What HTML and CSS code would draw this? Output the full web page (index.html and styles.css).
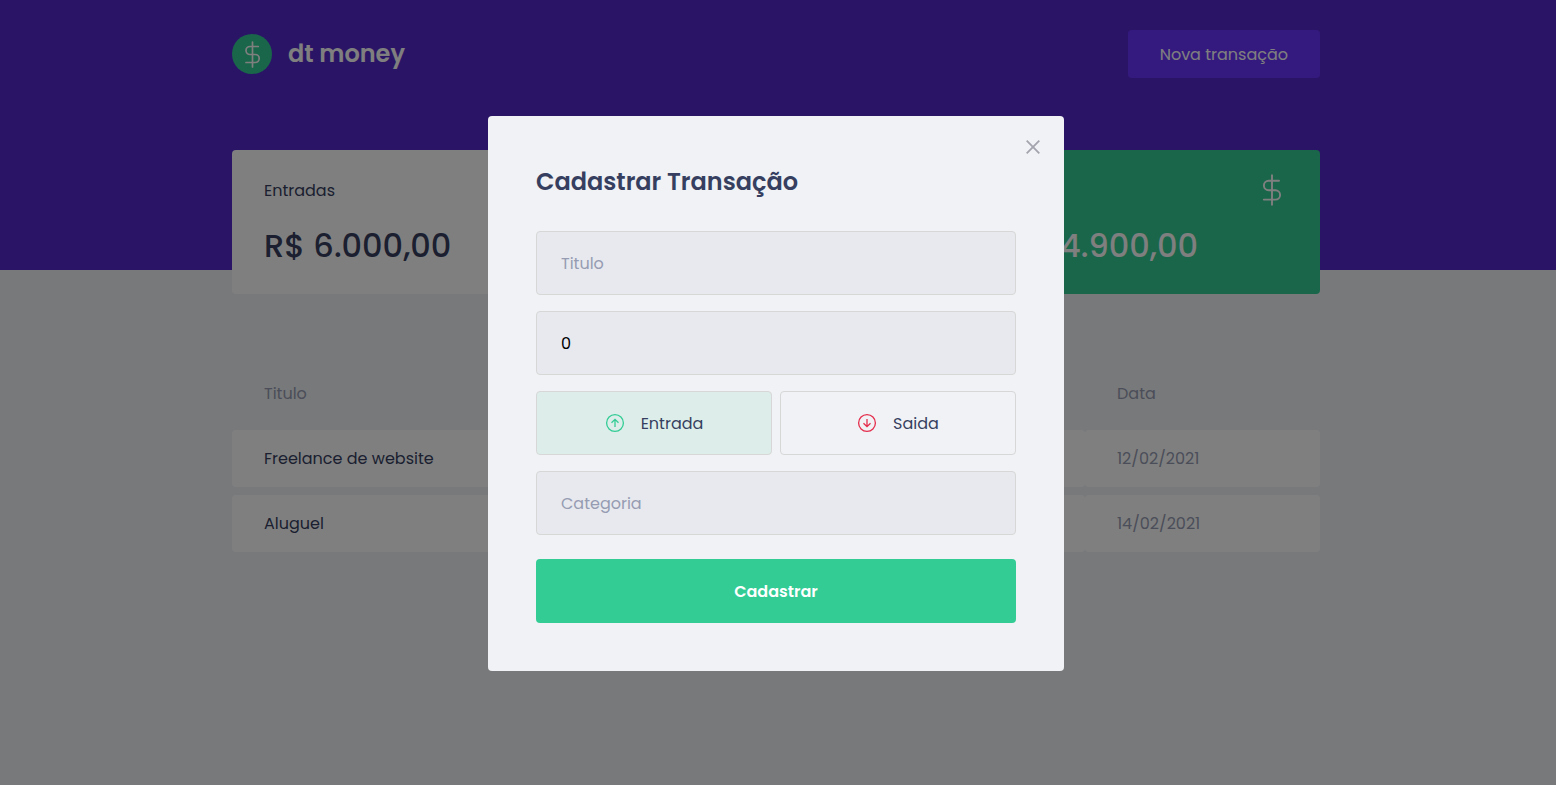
FILE: index.html
```html
<!DOCTYPE html>
<html lang="pt-BR">
<head>
<meta charset="utf-8">
<meta name="viewport" content="width=device-width, initial-scale=1">
<title>dt money</title>
<link rel="stylesheet" href="styles.css">
</head>
<body>
<div class="app">
  <header class="header">
    <div class="header-content">
      <div class="brand">
        <svg class="brand-logo" viewBox="0 0 40 40" aria-hidden="true">
          <circle cx="20" cy="20" r="20" fill="#33cc95"/>
          <path d="M20.500 8v25M26.300 12.500h-8.300a4 4 0 0 0 0 8h5.200a4 4 0 0 1 0 8h-9.200" fill="none" stroke="#fff" stroke-width="1.700" stroke-linecap="round"/>
        </svg>
        <span class="brand-name">dt money</span>
      </div>
      <button class="new-button" type="button">Nova transação</button>
    </div>
  </header>
  <main class="container">
    <section class="summary">
      <article class="card">
        <div class="card-head"><span>Entradas</span></div>
        <strong class="card-value">R$ 6.000,00</strong>
      </article>
      <article class="card"></article>
      <article class="card card-total">
        <div class="card-head">
          <svg class="card-icon" viewBox="0 0 32 32" aria-hidden="true">
            <path d="M16 1.200v29.600M23 6.800H12.600a4.700 4.700 0 0 0 0 9.400h6.800a4.700 4.700 0 0 1 0 9.400H7.800" fill="none" stroke="#fff" stroke-width="1.900" stroke-linecap="round"/>
          </svg>
        </div>
        <strong class="card-value">R$ 4.900,00</strong>
      </article>
    </section>
    <table class="transactions">
      <colgroup><col class="col-title"><col><col class="col-date"></colgroup>
      <thead>
        <tr><th>Titulo</th><th></th><th>Data</th></tr>
      </thead>
      <tbody>
        <tr><td class="title-cell">Freelance de website</td><td></td><td>12/02/2021</td></tr>
        <tr><td class="title-cell">Aluguel</td><td></td><td>14/02/2021</td></tr>
      </tbody>
    </table>
  </main>
</div>
<div class="overlay">
  <div class="modal" role="dialog" aria-modal="true" aria-labelledby="modal-title">
    <button class="close" type="button" aria-label="Fechar">
      <svg viewBox="0 0 14 14" aria-hidden="true"><path d="M.7.7l12.600 12.600M13.300.7L.7 13.300" fill="none" stroke="#a3a4ad" stroke-width="1.800"/></svg>
    </button>
    <form class="form">
      <h2 class="form-title" id="modal-title">Cadastrar Transação</h2>
      <input class="field" type="text" placeholder="Titulo" aria-label="Titulo">
      <input class="field" type="text" inputmode="decimal" value="0" aria-label="Valor">
      <div class="types">
        <button class="type type-active" type="button" aria-pressed="true">
          <svg viewBox="0 0 20 20" aria-hidden="true"><g fill="none" stroke="#33cc95" stroke-width="1.300"><circle cx="10" cy="10" r="8.400"/><path d="M10 14V6.800M6.500 9.800L10 6.300l3.500 3.500"/></g></svg>
          <span>Entrada</span>
        </button>
        <button class="type" type="button" aria-pressed="false">
          <svg viewBox="0 0 20 20" aria-hidden="true"><g fill="none" stroke="#e52e4d" stroke-width="1.300"><circle cx="10" cy="10" r="8.400"/><path d="M10 6v7.200M6.500 10.200l3.500 3.500 3.500-3.500"/></g></svg>
          <span>Saida</span>
        </button>
      </div>
      <input class="field" type="text" placeholder="Categoria" aria-label="Categoria">
      <button class="submit" type="submit">Cadastrar</button>
    </form>
  </div>
</div>
</body>
</html>
```

FILE: styles.css
```css
* { box-sizing: border-box; margin: 0; padding: 0; }

body {
  min-height: 100vh;
  background: #f0f2f5;
  color: #363f5f;
  font-family: Poppins, Inter, "Open Sans", sans-serif;
  font-size: 16px;
}

button, input { font: inherit; }
button { cursor: pointer; border: 0; }

.app, .overlay { padding-right: 4px; }

.header { margin-right: -4px; padding-right: 4px; background: #5429cc; }

.header-content {
  display: flex;
  align-items: center;
  justify-content: space-between;
  max-width: 1120px;
  margin: 0 auto;
  padding: 30px 16px 192px;
}

.brand { display: flex; align-items: center; gap: 16px; }
.brand-logo { width: 40px; height: 40px; }
.brand-name { color: #fff; font-size: 24px; font-weight: 600; line-height: 40px; }

.new-button {
  height: 48px;
  padding: 0 32px;
  min-width: 192px;
  border-radius: 4px;
  background: #6933ff;
  color: #fff;
  white-space: nowrap;
}

.container { max-width: 1120px; margin: 0 auto; padding: 0 16px; }

.summary {
  display: grid;
  grid-template-columns: repeat(3, 1fr);
  gap: 32px;
  margin-top: -120px;
}

.card {
  padding: 24px 32px;
  border-radius: 4px;
  background: #fff;
}
.card-total { background: #33cc95; color: #fff; }
.card-head {
  display: flex;
  align-items: center;
  justify-content: space-between;
  height: 32px;
}
.card-icon { width: 32px; height: 32px; margin-left: auto; }
.card-value {
  display: block;
  margin-top: 16px;
  font-size: 32px;
  font-weight: 500;
  line-height: 48px;
}

.transactions {
  width: 100%;
  margin-top: 64px;
  border-spacing: 0 8px;
  table-layout: fixed;
}
.col-title { width: 34%; }
.col-date { width: 235px; }
.transactions th {
  padding: 16px 32px;
  color: #969cb2;
  font-weight: 400;
  line-height: 24px;
  text-align: left;
}
.transactions td {
  padding: 16px 32px;
  border-radius: 4px;
  background: #fff;
  color: #969cb2;
  line-height: 25px;
}
.transactions .title-cell { color: #363f5f; }

.overlay {
  position: fixed;
  inset: 0;
  display: flex;
  align-items: center;
  justify-content: center;
  padding-top: 2px;
  background: rgba(0, 0, 0, 0.5);
}

.modal {
  position: relative;
  width: 100%;
  max-width: 576px;
  padding: 48px;
  border-radius: 4px;
  background: #f0f2f5;
}

.close {
  position: absolute;
  top: 24px;
  right: 24px;
  display: flex;
  background: transparent;
}
.close svg { width: 14px; height: 14px; }

.form { display: flex; flex-direction: column; gap: 16px; }
.form-title { margin-bottom: 16px; font-size: 24px; font-weight: 600; line-height: 35px; }

.field {
  width: 100%;
  height: 64px;
  padding: 0 24px;
  border: 1px solid #d7d7d7;
  border-radius: 4px;
  background: #e7e9ee;
  color: #000;
}
.field::placeholder { color: #969cb2; opacity: 1; }

.types { display: grid; grid-template-columns: 1fr 1fr; gap: 8px; }
.type {
  display: flex;
  align-items: center;
  justify-content: center;
  gap: 16px;
  height: 64px;
  border: 1px solid #d7d7d7;
  border-radius: 4px;
  background: transparent;
  color: #363f5f;
}
.type-active { background: #ddeeea; }
.type svg { width: 20px; height: 20px; }

.submit {
  height: 64px;
  margin-top: 8px;
  border-radius: 4px;
  background: #33cc95;
  color: #fff;
  font-weight: 600;
}
```
